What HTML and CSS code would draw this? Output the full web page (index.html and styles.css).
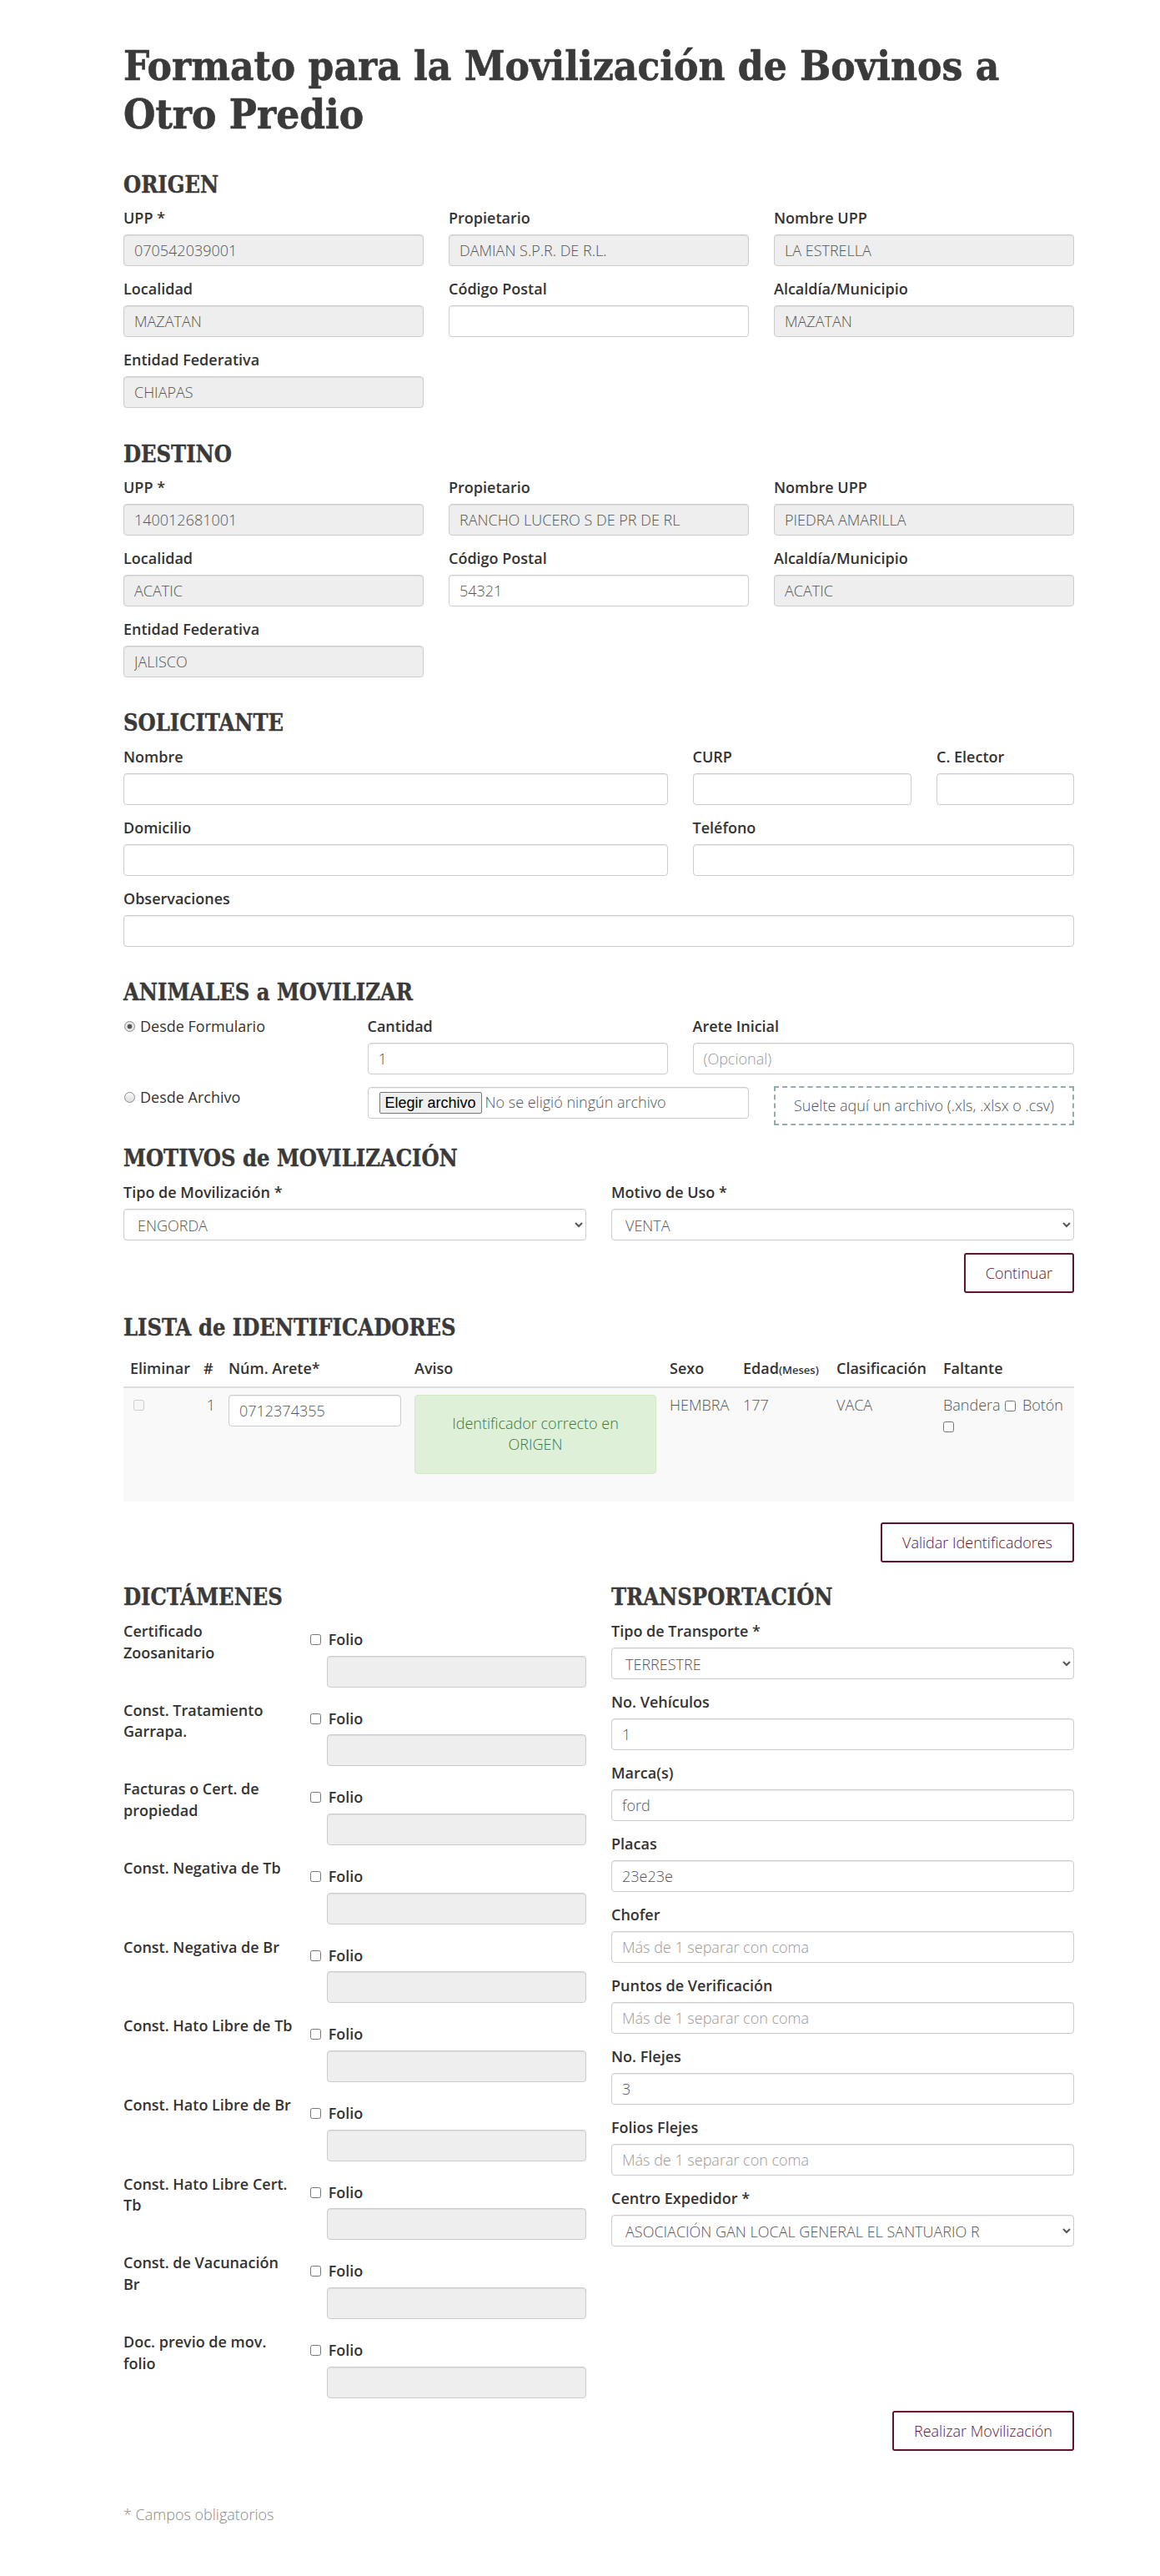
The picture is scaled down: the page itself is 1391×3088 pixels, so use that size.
FILE: index.html
```html
<!DOCTYPE html>
<html lang="es">
<head>
<meta charset="utf-8">
<title>Formato para la Movilización de Bovinos a Otro Predio</title>
<link rel="stylesheet" href="styles.css">
</head>
<body>
<main class="page">
  <h1 class="title">Formato para la Movilización de Bovinos a<br>Otro Predio</h1>

  <section class="section">
    <h2 class="section-title">ORIGEN</h2>
    <div class="grid">
      <div class="field span-4"><label class="label">UPP *</label><input class="control is-off" readonly value="070542039001"></div>
      <div class="field span-4"><label class="label">Propietario</label><input class="control is-off" readonly value="DAMIAN S.P.R. DE R.L."></div>
      <div class="field span-4"><label class="label">Nombre UPP</label><input class="control is-off" readonly value="LA ESTRELLA"></div>
      <div class="field span-4"><label class="label">Localidad</label><input class="control is-off" readonly value="MAZATAN"></div>
      <div class="field span-4"><label class="label">Código Postal</label><input class="control" value=""></div>
      <div class="field span-4"><label class="label">Alcaldía/Municipio</label><input class="control is-off" readonly value="MAZATAN"></div>
      <div class="field span-4"><label class="label">Entidad Federativa</label><input class="control is-off" readonly value="CHIAPAS"></div>
    </div>
  </section>

  <section class="section">
    <h2 class="section-title">DESTINO</h2>
    <div class="grid">
      <div class="field span-4"><label class="label">UPP *</label><input class="control is-off" readonly value="140012681001"></div>
      <div class="field span-4"><label class="label">Propietario</label><input class="control is-off" readonly value="RANCHO LUCERO S DE PR DE RL"></div>
      <div class="field span-4"><label class="label">Nombre UPP</label><input class="control is-off" readonly value="PIEDRA AMARILLA"></div>
      <div class="field span-4"><label class="label">Localidad</label><input class="control is-off" readonly value="ACATIC"></div>
      <div class="field span-4"><label class="label">Código Postal</label><input class="control" value="54321"></div>
      <div class="field span-4"><label class="label">Alcaldía/Municipio</label><input class="control is-off" readonly value="ACATIC"></div>
      <div class="field span-4"><label class="label">Entidad Federativa</label><input class="control is-off" readonly value="JALISCO"></div>
    </div>
  </section>

  <section class="section">
    <h2 class="section-title">SOLICITANTE</h2>
    <div class="grid">
      <div class="field span-7"><label class="label">Nombre</label><input class="control" value=""></div>
      <div class="field span-3"><label class="label">CURP</label><input class="control" value=""></div>
      <div class="field span-2"><label class="label">C. Elector</label><input class="control" value=""></div>
      <div class="field span-7"><label class="label">Domicilio</label><input class="control" value=""></div>
      <div class="field span-5"><label class="label">Teléfono</label><input class="control" value=""></div>
      <div class="field span-12"><label class="label">Observaciones</label><input class="control" value=""></div>
    </div>
  </section>

  <section class="section">
    <h2 class="section-title">ANIMALES a MOVILIZAR</h2>
    <div class="grid">
      <label class="radio span-3"><input type="radio" name="origen" class="radio-input" checked> Desde Formulario</label>
      <div class="field span-4"><label class="label">Cantidad</label><input class="control" value="1"></div>
      <div class="field span-5"><label class="label">Arete Inicial</label><input class="control" placeholder="(Opcional)"></div>
      <label class="radio span-3"><input type="radio" name="origen" class="radio-input"> Desde Archivo</label>
      <div class="control file-box span-5"><button type="button" class="file-btn">Elegir archivo</button><span class="file-name">No se eligió ningún archivo</span></div>
      <div class="drop-zone span-4">Suelte aquí un archivo (.xls, .xlsx o .csv)</div>
    </div>
  </section>

  <section class="section">
    <h2 class="section-title">MOTIVOS de MOVILIZACIÓN</h2>
    <div class="grid">
      <div class="field span-6"><label class="label">Tipo de Movilización *</label><select class="control select"><option>ENGORDA</option></select></div>
      <div class="field span-6"><label class="label">Motivo de Uso *</label><select class="control select"><option>VENTA</option></select></div>
    </div>
    <div class="actions"><button type="button" class="btn-outline">Continuar</button></div>
  </section>

  <section class="section">
    <h2 class="section-title">LISTA de IDENTIFICADORES</h2>
    <table class="id-table">
      <colgroup>
        <col class="c-del"><col class="c-num"><col class="c-arete"><col class="c-aviso"><col class="c-sexo"><col class="c-edad"><col class="c-clas"><col class="c-falt">
      </colgroup>
      <thead>
        <tr><th>Eliminar</th><th>#</th><th>Núm. Arete*</th><th>Aviso</th><th>Sexo</th><th>Edad<small class="th-small">(Meses)</small></th><th>Clasificación</th><th>Faltante</th></tr>
      </thead>
      <tbody>
        <tr>
          <td><input type="checkbox" class="row-check" disabled></td>
          <td class="num">1</td>
          <td><input class="control" value="0712374355"></td>
          <td><div class="alert-ok">Identificador correcto en ORIGEN</div></td>
          <td>HEMBRA</td>
          <td>177</td>
          <td>VACA</td>
          <td>Bandera <input type="checkbox" class="mini-check"> Botón <input type="checkbox" class="mini-check first"></td>
        </tr>
      </tbody>
    </table>
    <div class="actions"><button type="button" class="btn-outline">Validar Identificadores</button></div>
  </section>

  <section class="section grid">
    <div class="span-6">
      <h2 class="section-title">DICTÁMENES</h2>
      <div class="dict-row"><span class="dict-label">Certificado<br>Zoosanitario</span><div><label class="check"><input type="checkbox" class="check-input"> Folio</label><input class="control is-off" readonly></div></div>
      <div class="dict-row"><span class="dict-label">Const. Tratamiento<br>Garrapa.</span><div><label class="check"><input type="checkbox" class="check-input"> Folio</label><input class="control is-off" readonly></div></div>
      <div class="dict-row"><span class="dict-label">Facturas o Cert. de<br>propiedad</span><div><label class="check"><input type="checkbox" class="check-input"> Folio</label><input class="control is-off" readonly></div></div>
      <div class="dict-row"><span class="dict-label">Const. Negativa de Tb</span><div><label class="check"><input type="checkbox" class="check-input"> Folio</label><input class="control is-off" readonly></div></div>
      <div class="dict-row"><span class="dict-label">Const. Negativa de Br</span><div><label class="check"><input type="checkbox" class="check-input"> Folio</label><input class="control is-off" readonly></div></div>
      <div class="dict-row"><span class="dict-label">Const. Hato Libre de Tb</span><div><label class="check"><input type="checkbox" class="check-input"> Folio</label><input class="control is-off" readonly></div></div>
      <div class="dict-row"><span class="dict-label">Const. Hato Libre de Br</span><div><label class="check"><input type="checkbox" class="check-input"> Folio</label><input class="control is-off" readonly></div></div>
      <div class="dict-row"><span class="dict-label">Const. Hato Libre Cert.<br>Tb</span><div><label class="check"><input type="checkbox" class="check-input"> Folio</label><input class="control is-off" readonly></div></div>
      <div class="dict-row"><span class="dict-label">Const. de Vacunación<br>Br</span><div><label class="check"><input type="checkbox" class="check-input"> Folio</label><input class="control is-off" readonly></div></div>
      <div class="dict-row"><span class="dict-label">Doc. previo de mov.<br>folio</span><div><label class="check"><input type="checkbox" class="check-input"> Folio</label><input class="control is-off" readonly></div></div>
    </div>
    <div class="span-6">
      <h2 class="section-title">TRANSPORTACIÓN</h2>
      <div class="field"><label class="label">Tipo de Transporte *</label><select class="control select"><option>TERRESTRE</option></select></div>
      <div class="field"><label class="label">No. Vehículos</label><input class="control" value="1"></div>
      <div class="field"><label class="label">Marca(s)</label><input class="control" value="ford"></div>
      <div class="field"><label class="label">Placas</label><input class="control" value="23e23e"></div>
      <div class="field"><label class="label">Chofer</label><input class="control" placeholder="Más de 1 separar con coma"></div>
      <div class="field"><label class="label">Puntos de Verificación</label><input class="control" placeholder="Más de 1 separar con coma"></div>
      <div class="field"><label class="label">No. Flejes</label><input class="control" value="3"></div>
      <div class="field"><label class="label">Folios Flejes</label><input class="control" placeholder="Más de 1 separar con coma"></div>
      <div class="field"><label class="label">Centro Expedidor *</label><select class="control select"><option>ASOCIACIÓN GAN LOCAL GENERAL EL SANTUARIO R</option></select></div>
    </div>
  </section>

  <div class="actions final"><button type="button" class="btn-outline">Realizar Movilización</button></div>

  <p class="note">* Campos obligatorios</p>
</main>
</body>
</html>
```

FILE: styles.css
```css
* { box-sizing: border-box; }

html, body {
  margin: 0;
  padding: 0;
  background: #ffffff;
}

body {
  font-family: "Open Sans", "Liberation Sans", sans-serif;
  font-size: 18px;
  line-height: 1.42857;
  font-weight: 300;
  color: #545454;
}

.page {
  width: 1140px;
  margin-left: 148px;
  display: flex;
  flex-direction: column;
  padding-bottom: 50px;
}

.title {
  font-family: "DejaVu Serif Condensed", "DejaVu Serif", serif;
  font-stretch: condensed;
  font-weight: 700;
  font-size: 49px;
  line-height: 57.6px;
  margin: 51px 0 15.3px;
  color: #3a3a3a;
  -webkit-text-stroke: 0.6px #3a3a3a;
}

.section-title {
  font-family: "DejaVu Serif Condensed", "DejaVu Serif", serif;
  font-stretch: condensed;
  font-weight: 700;
  font-size: 27px;
  line-height: 29.7px;
  margin: 25.2px 0 13px;
  color: #3a3a3a;
  -webkit-text-stroke: 0.4px #3a3a3a;
}

.grid {
  display: grid;
  grid-template-columns: repeat(12, minmax(0, 1fr));
  column-gap: 30px;
}

.span-2 { grid-column: span 2; }
.span-3 { grid-column: span 3; }
.span-4 { grid-column: span 4; }
.span-5 { grid-column: span 5; }
.span-6 { grid-column: span 6; }
.span-7 { grid-column: span 7; }
.span-12 { grid-column: span 12; }

.field {
  margin-bottom: 15.3px;
  min-width: 0;
}

.label {
  display: block;
  font-weight: 600;
  color: #333333;
  margin-bottom: 6px;
}

.control {
  display: block;
  width: 100%;
  height: 38px;
  padding: 6px 12px;
  font-family: "Open Sans", "Liberation Sans", sans-serif;
  font-size: 18px;
  font-weight: 300;
  line-height: 1.42857;
  color: #555555;
  background: #ffffff;
  border: 1px solid #cccccc;
  border-radius: 4px;
  box-shadow: inset 0 1px 1px rgba(0, 0, 0, 0.075);
  outline: none;
}

.control::placeholder { color: #999999; }

.control.is-off { background: #eeeeee; }

.select { padding-right: 8px; }

/* radio */
.radio {
  display: flex;
  align-items: center;
  align-self: start;
  height: 25.71px;
  font-weight: 400;
  color: #333333;
}

.radio-input {
  appearance: none;
  -webkit-appearance: none;
  width: 13px;
  height: 13px;
  margin: 0 6px 0 1px;
  border: 1px solid #8a8a8a;
  border-radius: 50%;
  background: linear-gradient(#fafafa, #dcdcdc);
  flex: none;
}

.radio-input:checked {
  background: radial-gradient(circle, #555555 0 2.6px, #e6e6e6 3.2px);
}

/* file */
.file-box {
  display: flex;
  align-items: center;
  padding: 5px 13px;
  align-self: start;
}

.file-btn {
  font-family: "Liberation Sans", Arial, sans-serif;
  font-size: 18px;
  line-height: 22px;
  height: 26px;
  padding: 1px 6px;
  color: #000000;
  background: #efefef;
  border: 1px solid #767676;
  border-radius: 2px;
  margin-right: 4px;
}

.file-name {
  color: #555555;
  white-space: nowrap;
}

.drop-zone {
  height: 47px;
  margin-top: -1px;
  border: 2px dashed #94acac;
  display: flex;
  align-items: center;
  justify-content: center;
  color: #555555;
}

/* buttons */
.actions {
  display: flex;
  justify-content: flex-end;
  margin-bottom: 2px;
}

.btn-outline {
  height: 48px;
  padding: 0 24px;
  background: #ffffff;
  border: 2px solid #611232;
  border-radius: 3px;
  color: #611232;
  font-family: "Open Sans", "Liberation Sans", sans-serif;
  font-size: 18px;
  font-weight: 300;
}

/* table */
.id-table {
  width: 1140px;
  table-layout: fixed;
  border-collapse: collapse;
  margin: 0 0 25px;
}

.c-del { width: 88px; }
.c-num { width: 30px; }
.c-arete { width: 223px; }
.c-aviso { width: 306px; }
.c-sexo { width: 88px; }
.c-edad { width: 112px; }
.c-clas { width: 128px; }
.c-falt { width: 165px; }

.id-table th {
  text-align: left;
  padding: 8px;
  font-weight: 600;
  color: #333333;
  border-bottom: 2px solid #dddddd;
  vertical-align: bottom;
  white-space: nowrap;
}

.th-small {
  font-size: 13px;
  font-weight: 600;
}

.id-table td {
  padding: 8px;
  vertical-align: top;
  background: #f9f9f9;
  color: #555555;
}

.id-table td.num { text-align: right; }

.row-check {
  margin: 5px 0 0 4px;
}

.mini-check {
  margin: 3px 3px 3px 1px;
  vertical-align: -1px;
}

.mini-check.first { margin-left: 0; }

.alert-ok {
  background: #dff0d8;
  border: 1px solid #d6e9c6;
  color: #3c763d;
  border-radius: 4px;
  padding: 21px 15px;
  text-align: center;
  margin-bottom: 25px;
}

/* dictamenes */
.dict-row {
  display: grid;
  grid-template-columns: 214px 1fr;
  column-gap: 30px;
  margin-bottom: 15px;
}

.dict-label {
  font-weight: 600;
  color: #333333;
  white-space: nowrap;
}

.check {
  display: block;
  margin: 10px 0 6px -20px;
  font-weight: 600;
  color: #333333;
}

.check-input {
  margin: 3px 4px 3px 0;
  vertical-align: baseline;
}

.note {
  margin: 62px 0 0;
  color: #8a8a8a;
}
```
